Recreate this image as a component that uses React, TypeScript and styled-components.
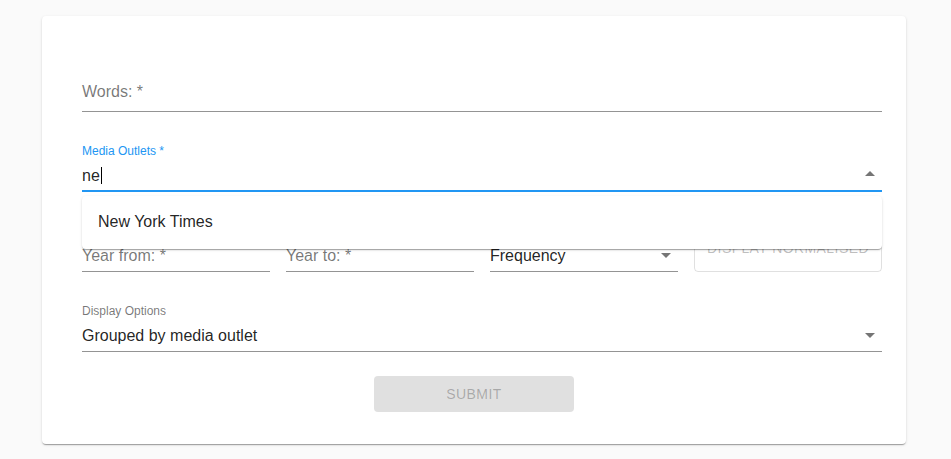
import React from 'react';
import styled, { createGlobalStyle } from 'styled-components';

const GlobalStyle = createGlobalStyle`
  body {
    margin: 0;
    background-color: #fafafa;
    font-family: "Liberation Sans", Helvetica, Arial, sans-serif;
  }
`;

const Page = styled.div`
  padding: 16px 45px 15px 42px;
`;

const Card = styled.form`
  display: flex;
  flex-direction: column;
  align-items: stretch;
  padding: 48px 24px 32px 40px;
  border-radius: 4px;
  background-color: #ffffff;
  box-shadow:
    0px 2px 1px -1px rgba(0, 0, 0, 0.2),
    0px 1px 1px 0px rgba(0, 0, 0, 0.14),
    0px 1px 3px 0px rgba(0, 0, 0, 0.12);
`;

const Fields = styled.div`
  display: flex;
  flex-direction: column;
  gap: 32px;
`;

const Control = styled.div<{ $focused?: boolean }>`
  position: relative;
  height: 48px;
  box-sizing: border-box;
  display: flex;
  flex-direction: column;
  border-bottom: ${({ $focused }) => ($focused ? '2px solid #2196f3' : '1px solid rgba(0, 0, 0, 0.42)')};
`;

const SmallLabel = styled.label<{ $focused?: boolean }>`
  height: 16px;
  font-size: 12px;
  line-height: 12px;
  padding-top: 1px;
  box-sizing: border-box;
  color: ${({ $focused }) => ($focused ? '#2196f3' : 'rgba(0, 0, 0, 0.54)')};
`;

const InputRow = styled.div<{ $raise?: number }>`
  display: flex;
  flex: 1;
  align-items: flex-start;
  padding-top: ${({ $raise }) => 6 - ($raise ?? 0)}px;
  box-sizing: border-box;
  font-size: 16px;
  line-height: 19px;
`;

const Placeholder = styled.span`
  color: rgba(0, 0, 0, 0.54);
  flex: 1;
`;

const Value = styled.span`
  color: rgba(0, 0, 0, 0.87);
  flex: 1;
  display: flex;
  align-items: center;
`;

const Caret = styled.span`
  display: inline-block;
  width: 1px;
  height: 17px;
  margin-left: 1px;
  background-color: #000000;
`;

const ArrowIcon = styled.svg<{ $up?: boolean }>`
  position: absolute;
  right: 0;
  bottom: 4px;
  width: 24px;
  height: 24px;
  fill: rgba(0, 0, 0, 0.54);
  transform: ${({ $up }) => ($up ? 'rotate(180deg)' : 'none')};
`;

const Popup = styled.ul`
  position: absolute;
  z-index: 2;
  left: 0;
  right: 0;
  top: 52px;
  margin: 0;
  padding: 6px 0 7px;
  list-style: none;
  background-color: #ffffff;
  border-radius: 4px;
  box-shadow:
    0px 2px 1px -1px rgba(0, 0, 0, 0.2),
    0px 1px 1px 0px rgba(0, 0, 0, 0.14),
    0px 1px 3px 0px rgba(0, 0, 0, 0.12);
`;

const Option = styled.li`
  padding: 8px 16px 8px;
  font-size: 16px;
  line-height: 24px;
  color: rgba(0, 0, 0, 0.87);
`;

const Row = styled.div`
  display: grid;
  grid-template-columns: repeat(4, 1fr);
  gap: 16px;
`;

const OutlinedButton = styled.button`
  height: 48px;
  padding: 0 12px;
  border: 1px solid rgba(0, 0, 0, 0.12);
  border-radius: 4px;
  background: transparent;
  font-family: inherit;
  font-size: 14px;
  font-weight: 400;
  letter-spacing: 0.03em;
  text-transform: uppercase;
  color: rgba(0, 0, 0, 0.26);
`;

const SubmitButton = styled.button`
  align-self: center;
  margin: 24px 0 0 -16px;
  width: 200px;
  height: 36px;
  border: none;
  border-radius: 4px;
  background-color: #e0e0e0;
  font-family: inherit;
  font-size: 14px;
  font-weight: 400;
  letter-spacing: 0.03em;
  text-transform: uppercase;
  color: rgba(0, 0, 0, 0.26);
`;

const Arrow = ({ up }: { up?: boolean }) => (
  <ArrowIcon viewBox='0 0 24 24' $up={up}>
    <path d='M7 10l5 5 5-5z' />
  </ArrowIcon>
);

export default function App() {
  return (
    <Page>
      <GlobalStyle />
      <Card onSubmit={(e) => e.preventDefault()}>
        <Fields>
          <Control>
            <SmallLabel />
            <InputRow $raise={4}>
              <Placeholder>Words: *</Placeholder>
            </InputRow>
          </Control>

          <Control $focused>
            <SmallLabel $focused>Media Outlets *</SmallLabel>
            <InputRow>
              <Value>
                ne
                <Caret />
              </Value>
            </InputRow>
            <Arrow up />
            <Popup>
              <Option>New York Times</Option>
            </Popup>
          </Control>

          <Row>
            <Control>
              <SmallLabel />
              <InputRow>
                <Placeholder>Year from: *</Placeholder>
              </InputRow>
            </Control>
            <Control>
              <SmallLabel />
              <InputRow>
                <Placeholder>Year to: *</Placeholder>
              </InputRow>
            </Control>
            <Control>
              <SmallLabel />
              <InputRow>
                <Value>Frequency</Value>
              </InputRow>
              <Arrow />
            </Control>
            <OutlinedButton type='button' disabled>
              Display normalised
            </OutlinedButton>
          </Row>

          <Control>
            <SmallLabel>Display Options</SmallLabel>
            <InputRow>
              <Value>Grouped by media outlet</Value>
            </InputRow>
            <Arrow />
          </Control>
        </Fields>
        <SubmitButton type='submit' disabled>
          Submit
        </SubmitButton>
      </Card>
    </Page>
  );
}
